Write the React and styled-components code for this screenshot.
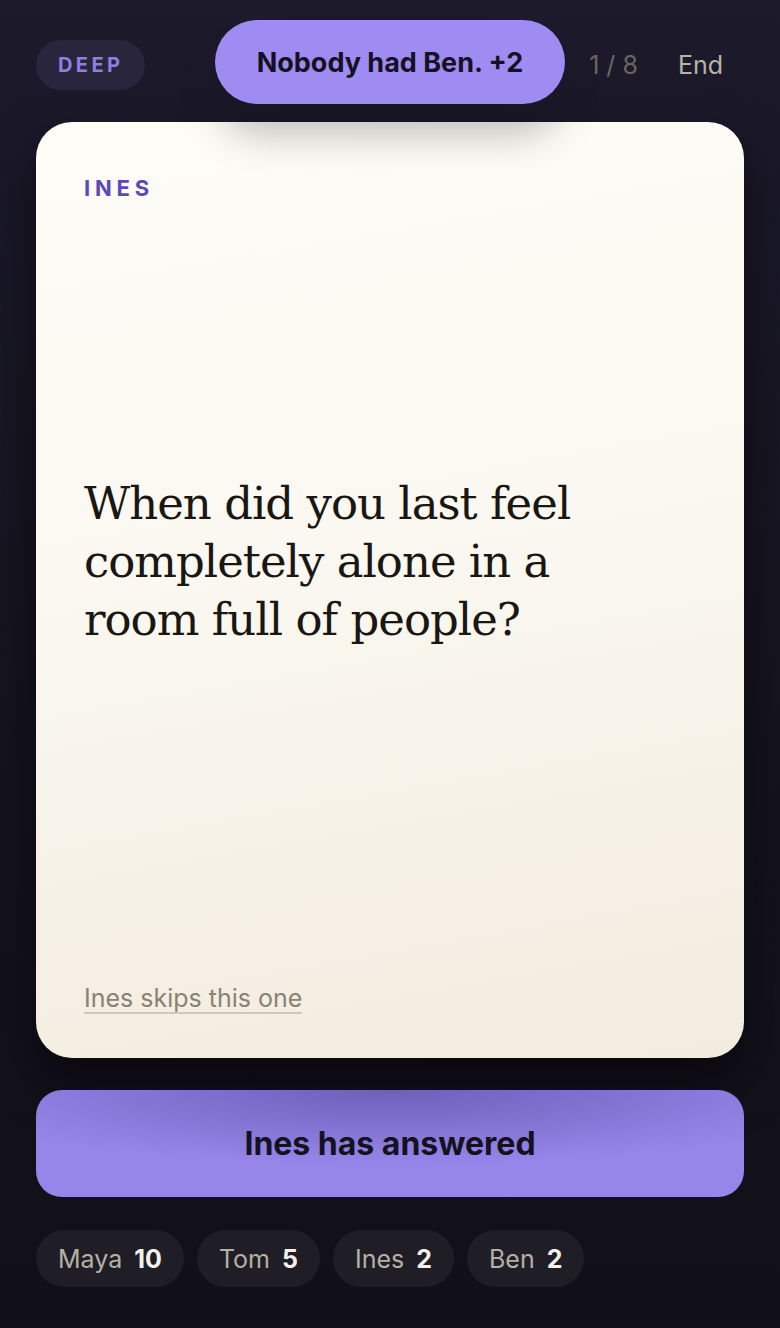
import React from "react";
import styled, { createGlobalStyle } from "styled-components";

const Global = createGlobalStyle`
  html, body { margin: 0; padding: 0; }
  body {
    background: linear-gradient(180deg, #1c1a2b 0%, #15141f 55%, #111018 100%);
    min-height: 1328px;
    font-family: "Inter", "DejaVu Sans", sans-serif;
    -webkit-font-smoothing: antialiased;
  }
`;

const Page = styled.div`
  position: relative;
  box-sizing: border-box;
  width: 780px;
  min-height: 1328px;
  padding: 40px 36px 40px;
  display: flex;
  flex-direction: column;
`;

const Header = styled.header`
  height: 50px;
  display: flex;
  align-items: center;
  justify-content: space-between;
`;

const ModePill = styled.div`
  height: 50px;
  padding: 0 22px;
  box-sizing: border-box;
  border-radius: 25px;
  background: #29253d;
  color: #8f7fe3;
  font-weight: 700;
  font-size: 20px;
  letter-spacing: 3.4px;
  display: flex;
  align-items: center;
`;

const HeaderRight = styled.div`
  display: flex;
  align-items: center;
  gap: 40px;
  padding-right: 21px;
  font-size: 25px;
`;

const Progress = styled.span`
  color: #6b665f;
  font-weight: 400;
`;

const EndButton = styled.span`
  color: #b9b3a7;
  font-weight: 400;
`;

const Toast = styled.div`
  position: absolute;
  top: 20px;
  left: 50%;
  transform: translateX(-50%);
  height: 84px;
  width: 350px;
  box-sizing: border-box;
  border-radius: 42px;
  background: #9e8cf3;
  color: #15121f;
  font-size: 27px;
  font-weight: 700;
  display: flex;
  align-items: center;
  justify-content: center;
  box-shadow: 0 34px 40px -6px rgba(20, 16, 30, 0.28);
  z-index: 2;
`;

const Card = styled.section`
  margin-top: 32px;
  height: 936px;
  box-sizing: border-box;
  border-radius: 36px;
  background: linear-gradient(170deg, #fdfcf6 0%, #faf8f0 45%, #f2ebdf 100%);
  padding: 53px 48px 44px;
  display: flex;
  flex-direction: column;
  box-shadow: 0 26px 50px rgba(0, 0, 0, 0.55);
  position: relative;
  z-index: 1;
`;

const Asker = styled.div`
  color: #5a4ab8;
  font-size: 22px;
  font-weight: 700;
  letter-spacing: 4.8px;
  line-height: 26px;
`;

const QuestionWrap = styled.div`
  flex: 1;
  display: flex;
  align-items: center;
  padding-bottom: 62px;
`;

const Question = styled.h1`
  margin: 0;
  max-width: 520px;
  font-family: "DejaVu Serif", "Liberation Serif", serif;
  font-weight: 400;
  font-size: 45px;
  line-height: 58px;
  color: #1a1612;
  letter-spacing: -1px;
`;

const SkipLink = styled.span`
  align-self: flex-start;
  color: #8a8272;
  font-size: 25px;
  line-height: 28px;
  border-bottom: 2px solid #cfc7b8;
`;

const AnswerButton = styled.button`
  margin-top: 32px;
  height: 107px;
  border: none;
  border-radius: 26px;
  background:
    radial-gradient(ellipse 66% 70% at 50% 0%, rgba(50, 38, 110, 0.4), rgba(50, 38, 110, 0) 100%),
    #9686ea;
  color: #15121f;
  font-family: "Inter", "DejaVu Sans", sans-serif;
  font-size: 32px;
  font-weight: 700;
  position: relative;
  z-index: 2;
`;

const Scores = styled.div`
  margin-top: 33px;
  display: flex;
  gap: 13px;
`;

const Chip = styled.div`
  height: 57px;
  box-sizing: border-box;
  padding: 0 22px;
  border-radius: 29px;
  background: #1f1e26;
  display: flex;
  align-items: center;
  gap: 12px;
  font-size: 25px;
`;

const ChipName = styled.span`
  color: #b6b0a4;
  font-weight: 400;
`;

const ChipScore = styled.span`
  color: #f4f1ea;
  font-weight: 700;
`;

const players = [
  { name: "Maya", score: 10 },
  { name: "Tom", score: 5 },
  { name: "Ines", score: 2 },
  { name: "Ben", score: 2 },
];

export default function App() {
  return (
    <>
      <Global />
      <Page>
        <Toast>Nobody had Ben. +2</Toast>
        <Header>
          <ModePill>DEEP</ModePill>
          <HeaderRight>
            <Progress>1 / 8</Progress>
            <EndButton>End</EndButton>
          </HeaderRight>
        </Header>
        <Card>
          <Asker>INES</Asker>
          <QuestionWrap>
            <Question>When did you last feel completely alone in a room full of people?</Question>
          </QuestionWrap>
          <SkipLink>Ines skips this one</SkipLink>
        </Card>
        <AnswerButton>Ines has answered</AnswerButton>
        <Scores>
          {players.map((p) => (
            <Chip key={p.name}>
              <ChipName>{p.name}</ChipName>
              <ChipScore>{p.score}</ChipScore>
            </Chip>
          ))}
        </Scores>
      </Page>
    </>
  );
}
